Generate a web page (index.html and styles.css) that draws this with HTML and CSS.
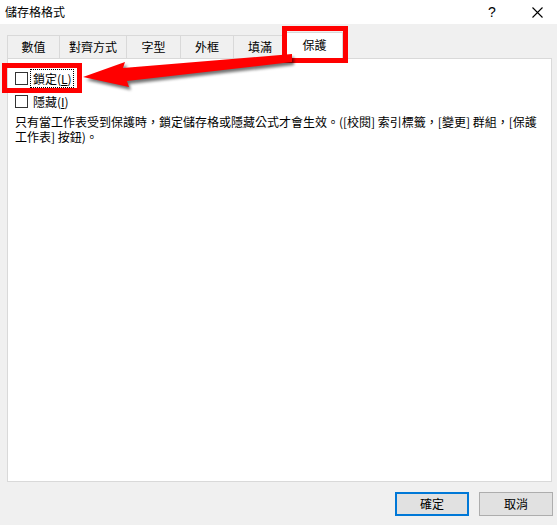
FILE: index.html
```html
<!DOCTYPE html>
<html lang="zh-Hant">
<head>
<meta charset="utf-8">
<title>儲存格格式</title>
<link rel="stylesheet" href="styles.css">
</head>
<body>
<div class="window">
  <div class="titlebar">
    <div class="title">儲存格格式</div>
    <div class="help">?</div>
    <div class="close">
      <svg width="11" height="11" viewBox="0 0 11 11"><path d="M0.5 0.5 L10.5 10.5 M10.5 0.5 L0.5 10.5" stroke="#000" stroke-width="1.1" fill="none"/></svg>
    </div>
  </div>
  <div class="content">
    <div class="tabs">
      <div class="tab w1">數值</div>
      <div class="tab w2">對齊方式</div>
      <div class="tab w3">字型</div>
      <div class="tab w4">外框</div>
      <div class="tab w5">填滿</div>
      <div class="tab selected">保護</div>
    </div>
    <div class="panel">
      <div class="check">
        <span class="box"></span>
        <span class="label focus">鎖定(<u>L</u>)</span>
      </div>
      <div class="check">
        <span class="box"></span>
        <span class="label">隱藏(<u>I</u>)</span>
      </div>
      <p class="note">只有當工作表受到保護時，鎖定儲存格或隱藏公式才會生效。([校閱] 索引標籤，[變更] 群組，[保護工作表] 按鈕)。</p>
    </div>
  </div>
  <div class="footer">
    <div class="btn default">確定</div>
    <div class="btn">取消</div>
  </div>

  <div class="mark mark-tab"></div>
  <div class="mark mark-check"></div>
  <svg class="arrow" width="557" height="525" viewBox="0 0 557 525">
    <defs>
      <filter id="shadow" x="-10%" y="-50%" width="120%" height="200%">
        <feGaussianBlur stdDeviation="1.6"/>
      </filter>
    </defs>
    <polygon points="86,80 127,65 125,71 294,57 294,65 129,84 131,90" fill="#000" opacity="0.55" filter="url(#shadow)"/>
    <polygon points="83,77 125,62 123,68 292,54 292,62 127,81 129,87" fill="#f00"/>
  </svg>
</div>
</body>
</html>
```
FILE: styles.css
```css
* { box-sizing: border-box; }
html, body { margin: 0; padding: 0; }
body {
  font-family: "Noto Sans CJK TC", "Noto Sans", sans-serif;
  font-size: 12px;
  color: #000;
  background: #f0f0f0;
}
.window {
  position: relative;
  width: 557px;
  height: 525px;
  background: #f0f0f0;
  display: flex;
  flex-direction: column;
  overflow: hidden;
}
.titlebar {
  height: 24px;
  background: #fff;
  display: flex;
  align-items: center;
}
.title {
  flex: 1;
  padding-left: 5px;
  line-height: 24px;
}
.help {
  width: 30px;
  margin-right: 10px;
  text-align: center;
  font-family: "Liberation Sans", sans-serif;
  font-size: 14px;
  line-height: 24px;
}
.close {
  width: 40px;
  height: 24px;
  display: flex;
  align-items: center;
  justify-content: center;
}
.content {
  padding: 8px 5px 0 7px;
  display: flex;
  flex-direction: column;
}
.tabs {
  display: flex;
  align-items: flex-end;
  height: 26px;
}
.tab {
  height: 23px;
  border: 1px solid #d9d9d9;
  border-bottom: none;
  margin-right: -1px;
  display: flex;
  align-items: center;
  justify-content: center;
  line-height: 14px;
  background: #f0f0f0;
}
.w1 { width: 53px; }
.w2 { width: 68px; }
.w3 { width: 55px; }
.w4 { width: 54px; }
.w5 { width: 54px; }
.tab.selected {
  width: 57px;
  height: 27px;
  margin-left: 0;
  margin-bottom: -1px;
  background: #fff;
  position: relative;
  z-index: 1;
  padding-bottom: 2px;
}
.panel {
  height: 424px;
  background: #fff;
  border: 1px solid #d9d9d9;
  padding: 8px 7px 0 7px;
}
.check {
  display: flex;
  align-items: center;
  height: 23px;
}
.box {
  width: 13px;
  height: 13px;
  border: 1px solid #333;
  background: #fff;
  margin-right: 2px;
}
.label {
  display: flex;
  align-items: center;
  height: 19px;
  padding: 0 1px 0 2px;
  line-height: 14px;
  border: 1px solid transparent;
}
.label.focus {
  border: 1px dotted #000;
}
.note {
  margin: 1px 0 0 0;
  line-height: 15px;
}
.footer {
  flex: 1;
  display: flex;
  justify-content: flex-end;
  align-items: flex-start;
  gap: 10px;
  padding: 10px 4px 0 0;
}
.btn {
  width: 74px;
  height: 24px;
  background: #e1e1e1;
  border: 1px solid #adadad;
  display: flex;
  align-items: center;
  justify-content: center;
  line-height: 14px;
}
.btn.default {
  border: 2px solid #0078d7;
}
.mark {
  position: absolute;
  border: 5px solid #f00;
  z-index: 2;
}
.mark-tab {
  left: 282px;
  top: 26px;
  width: 66px;
  height: 37px;
}
.mark-check {
  left: 2px;
  top: 63px;
  width: 80px;
  height: 30px;
}
.arrow {
  position: absolute;
  left: 0;
  top: 0;
  z-index: 3;
  pointer-events: none;
}
```
